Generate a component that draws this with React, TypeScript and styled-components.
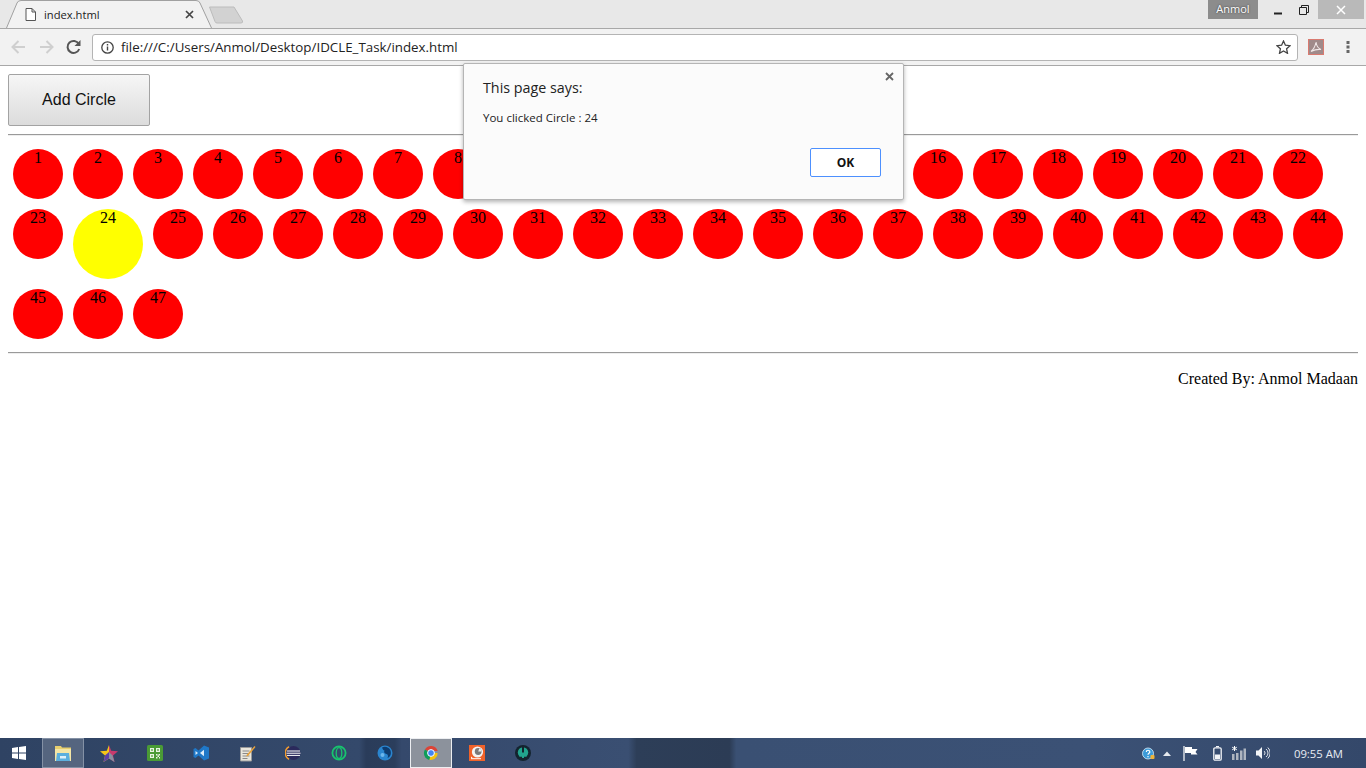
import React from "react";
import styled, { createGlobalStyle } from "styled-components";

const Global = createGlobalStyle`
  html, body { margin: 0; padding: 0; height: 100%; background: #fff; overflow: hidden; }
  #root { height: 100%; }
`;

const Screen = styled.div`
  position: relative;
  width: 1366px;
  height: 768px;
  display: flex;
  flex-direction: column;
  overflow: hidden;
`;

const TabStrip = styled.div`
  height: 28px;
  flex: none;
  background: #e8e8e8;
  border-bottom: 1px solid #a8a8a8;
  display: flex;
  padding-left: 6px;
`;

const Tab = styled.div`
  position: relative;
  width: 206px;
  height: 29px;
  flex: none;
  display: flex;
  align-items: center;
  padding: 0 18px 0 19px;
  box-sizing: border-box;
  gap: 8px;
`;

const TabShape = styled.svg`
  position: absolute;
  left: 0;
  top: 0;
`;

const TabIcon = styled.svg`
  position: relative;
  flex: none;
`;

const TabTitle = styled.span`
  position: relative;
  flex: 1;
  font: 11.2px "Open Sans", sans-serif;
  color: #222;
`;

const NewTab = styled.svg`
  flex: none;
  margin: 6px 0 0 -4px;
`;

const Spacer = styled.div`
  flex: 1;
`;

const UserBadge = styled.div`
  width: 50px;
  height: 19px;
  background: #8c8c8c;
  color: #fff;
  font: 11px "Open Sans", sans-serif;
  line-height: 18px;
  text-align: center;
  text-shadow: 0 0 2px #333;
`;

const WinButton = styled.div<{ $w: number; $bg?: string }>`
  width: ${(p) => p.$w}px;
  height: 19px;
  background: ${(p) => p.$bg ?? "transparent"};
  display: flex;
  align-items: center;
  justify-content: center;
  flex: none;
`;

const Toolbar = styled.div`
  height: 37px;
  flex: none;
  box-sizing: border-box;
  background: #f2f2f2;
  border-bottom: 1px solid #a8a8a8;
  display: flex;
  align-items: center;
  padding-left: 10px;
`;

const NavIcon = styled.svg`
  flex: none;
  margin-right: 11px;
`;

const ReloadIcon = styled.svg`
  flex: none;
  margin-right: 10px;
`;

const Omnibox = styled.div`
  width: 1206px;
  height: 27px;
  box-sizing: border-box;
  background: #fff;
  border: 1px solid #b4b4b4;
  border-radius: 3px;
  display: flex;
  align-items: center;
  padding: 0 6px 0 8px;
  gap: 7px;
  flex: none;
`;

const Url = styled.span`
  flex: 1;
  font: 13.33px "Open Sans", sans-serif;
  color: #222;
`;

const PdfIcon = styled.svg`
  flex: none;
  margin-left: 10px;
`;

const MenuIcon = styled.svg`
  flex: none;
  margin-left: 22px;
`;

const Page = styled.main`
  flex: 1;
  background: #fff;
  padding: 8px;
  font: 16px "Liberation Serif", serif;
  color: #000;
  min-height: 0;
`;

const AddButton = styled.button`
  display: block;
  width: 142px;
  height: 52px;
  box-sizing: border-box;
  background: linear-gradient(#f6f6f6, #dcdcdc);
  border: 1px solid #a3a3a3;
  border-radius: 2px;
  font: 16px "Liberation Sans", sans-serif;
  color: #111;
  padding: 0;
`;

const Rule = styled.hr`
  margin: 8px 0;
  border: 0;
  border-top: 1px solid #9a9a9a;
  border-bottom: 1px solid #eee;
`;

const Circles = styled.div`
  display: flex;
  flex-wrap: wrap;
  align-items: flex-start;
`;

const Circle = styled.div<{ $active?: boolean }>`
  width: ${(p) => (p.$active ? 70 : 50)}px;
  height: ${(p) => (p.$active ? 70 : 50)}px;
  margin: 5px;
  border-radius: 50%;
  background: ${(p) => (p.$active ? "#ffff00" : "#ff0000")};
  text-align: center;
  line-height: 18px;
`;

const Credit = styled.p`
  margin: 16px 0;
  text-align: right;
`;

const Dialog = styled.div`
  position: absolute;
  left: 463px;
  top: 63px;
  width: 441px;
  height: 137px;
  box-sizing: border-box;
  background: #fbfbfb;
  border: 1px solid #b5b5b5;
  border-radius: 2px;
  box-shadow: 0 2px 4px rgba(0, 0, 0, 0.3);
  padding: 14px 22px 0 19px;
  display: flex;
  flex-direction: column;
`;

const DialogClose = styled.svg`
  position: absolute;
  right: 9px;
  top: 8px;
`;

const DialogTitle = styled.div`
  font: 14.3px/20px "Open Sans", sans-serif;
  color: #222;
`;

const DialogText = styled.div`
  font: 11.5px/16px "Open Sans", sans-serif;
  color: #222;
  margin-top: 12px;
`;

const DialogActions = styled.div`
  display: flex;
  justify-content: flex-end;
  margin-top: 22px;
`;

const OkButton = styled.button`
  width: 71px;
  height: 29px;
  box-sizing: border-box;
  background: #fff;
  border: 1px solid #4d90fe;
  border-radius: 2px;
  font: bold 12px "Open Sans", sans-serif;
  color: #111;
  padding: 0;
`;

const Taskbar = styled.footer`
  height: 30px;
  flex: none;
  display: flex;
  align-items: center;
  background: linear-gradient(90deg, #2f4363 0%, #34496b 26.3%, #2a3c5a 26.8%, #2b3e5c 28.9%, #35496c 29.4%, #3a4f72 46%, #2d3e58 46.6%, #2c3c55 53.4%, #3a5073 53.9%, #3b5175 80%, #34486a 100%);
`;

const StartButton = styled.div`
  width: 38px;
  height: 30px;
  display: flex;
  align-items: center;
  justify-content: center;
  flex: none;
  margin-right: 4px;
`;

const TaskItem = styled.div<{ $state?: "open" | "focus" }>`
  width: 42px;
  height: 30px;
  box-sizing: border-box;
  margin-right: 4px;
  flex: none;
  display: flex;
  align-items: center;
  justify-content: center;
  background: ${(p) => (p.$state === "focus" ? "#8c929c" : p.$state === "open" ? "#55657f" : "transparent")};
  border: ${(p) =>
    p.$state === "focus" ? "1px solid #eceef1" : p.$state === "open" ? "1px solid #8491a5" : "none"};
`;

const Tray = styled.div`
  margin-left: auto;
  display: flex;
  align-items: center;
  height: 30px;
`;

const TrayIcon = styled.svg<{ $gap: number }>`
  flex: none;
  margin-right: ${(p) => p.$gap}px;
`;

const Clock = styled.span`
  font: 11.3px "Open Sans", sans-serif;
  color: #e8ecf2;
  margin-right: 23px;
  margin-left: 24px;
`;

const range = Array.from({ length: 47 }, (_, i) => i + 1);

export default function App() {
  return (
    <Screen>
      <Global />
      <TabStrip>
        <Tab>
          <TabShape width="206" height="29" viewBox="0 0 206 29">
            <path d="M0.5 28 L11 3 Q12 0.5 15 0.5 L190 0.5 Q193 0.5 194 3 L205.5 28" fill="#f2f2f2" stroke="#a0a0a0" />
          </TabShape>
          <TabIcon width="11" height="13" viewBox="0 0 11 13">
            <path d="M1 .5h6l3.5 3.5v8.5H1z M7 .5V4h3.5" fill="#fff" stroke="#555" />
          </TabIcon>
          <TabTitle>index.html</TabTitle>
          <TabIcon width="9" height="9" viewBox="0 0 9 9">
            <path d="M1 1l7 7M8 1L1 8" stroke="#444" strokeWidth="1.7" />
          </TabIcon>
        </Tab>
        <NewTab width="36" height="18" viewBox="0 0 36 18">
          <path d="M1.5 1 H26 L34.5 15 Q35 17 33 17 H9 Q7.5 17 7 15.5 Z" fill="#d2d2d2" stroke="#bcbcbc" />
        </NewTab>
        <Spacer />
        <UserBadge>Anmol</UserBadge>
        <WinButton $w={40}>
          <svg width="10" height="10" viewBox="0 0 10 10"><path d="M1 8.500h8" stroke="#222" strokeWidth="2" /></svg>
        </WinButton>
        <WinButton $w={12}>
          <svg width="10" height="10" viewBox="0 0 10 10"><path d="M.5 2.500h7v7h-7z M2.500 2.500v-2h7v7h-2" fill="none" stroke="#222" /></svg>
        </WinButton>
        <WinButton $w={8} />
        <WinButton $w={46} $bg="#b9b9b9">
          <svg width="10" height="10" viewBox="0 0 10 10"><path d="M1 1l8 8M9 1l-8 8" stroke="#fff" strokeWidth="1.500" /></svg>
        </WinButton>
        <WinButton $w={2} />
      </TabStrip>
      <Toolbar>
        <NavIcon width="17" height="16" viewBox="0 0 17 16">
          <path d="M15 8H3M8.500 2L2.500 8l6 6" fill="none" stroke="#cfcfcf" strokeWidth="2" />
        </NavIcon>
        <NavIcon width="17" height="16" viewBox="0 0 17 16">
          <path d="M2 8h12M8.500 2l6 6-6 6" fill="none" stroke="#cfcfcf" strokeWidth="2" />
        </NavIcon>
        <ReloadIcon width="16" height="16" viewBox="0 0 16 16">
          <path d="M13.200 10a6 6 0 1 1-.4-5" fill="none" stroke="#555" strokeWidth="2" />
          <path d="M14.500 1v6h-6z" fill="#555" />
        </ReloadIcon>
        <Omnibox>
          <svg width="13" height="13" viewBox="0 0 13 13" style={{ flex: "none" }}>
            <circle cx="6.500" cy="6.500" r="5.700" fill="none" stroke="#444" strokeWidth="1.300" />
            <path d="M6.500 5.500v4M6.500 3v1.500" stroke="#444" strokeWidth="1.400" />
          </svg>
          <Url>file:///C:/Users/Anmol/Desktop/IDCLE_Task/index.html</Url>
          <svg width="15" height="14" viewBox="0 0 15 14" style={{ flex: "none" }}>
            <path d="M7.500 1l1.900 4.200 4.600.5-3.400 3.100.9 4.500-4-2.300-4 2.300.9-4.500L1 5.700l4.600-.5z" fill="none" stroke="#444" strokeWidth="1.300" />
          </svg>
        </Omnibox>
        <PdfIcon width="16" height="16" viewBox="0 0 16 16">
          <rect x=".5" y=".5" width="15" height="15" fill="#a08a8a" stroke="#d97a70" />
          <path d="M8 3c-.5 3-2 7-5 9.500 3-1.500 7-2.500 10-2-2.500-1-4.500-4-5-7.500z" fill="none" stroke="#efe6e6" strokeWidth="1.100" />
        </PdfIcon>
        <MenuIcon width="4" height="14" viewBox="0 0 4 14">
          <path d="M.5 1h3v3h-3zM.5 5.500h3v3h-3zM.5 10h3v3h-3z" fill="#666" />
        </MenuIcon>
      </Toolbar>
      <Page>
        <AddButton>Add Circle</AddButton>
        <Rule />
        <Circles>
          {range.map((n) => (
            <Circle key={n} $active={n === 24}>{n}</Circle>
          ))}
        </Circles>
        <Rule />
        <Credit>Created By: Anmol Madaan</Credit>
      </Page>
      <Taskbar>
        <StartButton>
          <svg width="14" height="14" viewBox="0 0 14 14">
            <path d="M0 2l6-1v5.500H0zM7 .9L14 0v6.500H7zM0 7.500h6V13l-6-1zM7 7.500h7V14l-7-1z" fill="#fff" />
          </svg>
        </StartButton>
        <TaskItem $state="open">
          <svg width="18" height="17" viewBox="0 0 18 17">
            <path d="M1 1h6l1 1.500h9V15H1z" fill="#e8cf6e" />
            <rect x="1" y="4" width="16" height="12" fill="#f4e6a6" />
            <path d="M3 8h12l1 8H2z" fill="#5cb0de" />
            <rect x="6" y="11" width="6" height="2.500" fill="#dff1fa" />
          </svg>
        </TaskItem>
        <TaskItem>
          <svg width="18" height="17" viewBox="0 0 18 17">
            <path d="M9 0l2.200 5.800L18 6.300l-5 4.200 1.500 6.500L9 13.500z" fill="#c83a6d" />
            <path d="M9 0L6.800 5.800 0 6.300l5 4.200L3.500 17 9 13.500z" fill="#f5c518" />
            <path d="M9 7l3.500 3.500 2 6.500L9 13.500z" fill="#8a8fa0" />
            <path d="M9 7l-4 3.500L3.500 17 9 13.500z" fill="#5b3fa8" />
          </svg>
        </TaskItem>
        <TaskItem>
          <svg width="16" height="16" viewBox="0 0 16 16">
            <rect width="16" height="16" rx="1.500" fill="#4a9b35" />
            <path d="M3 3h4v4H3zM4.200 4.200v1.600h1.600V4.200zM9 3h4v4H9zM10.200 4.200v1.600h1.600V4.200zM3 9h4v4H3zM4.200 10.200v1.600h1.600v-1.600zM9 9h1.500v1.500H9zM11.500 9H13v1.500h-1.500zM10.500 10.500H12V12h-1.500zM9 12h1.500v1.500H9zM12 12h1v1.500h-1z" fill="#e8f4e2" fillRule="evenodd" />
          </svg>
        </TaskItem>
        <TaskItem>
          <svg width="16" height="16" viewBox="0 0 16 16">
            <path d="M11 .5l5 2v11l-5 2-5.500-5L2.500 13 .5 12V4l2-1 3 2.500z" fill="#1f78c8" />
            <path d="M2.500 6v4L5 8z" fill="#dcecfa" />
            <path d="M11 4.800v6.400L7 8z" fill="#dcecfa" />
          </svg>
        </TaskItem>
        <TaskItem>
          <svg width="17" height="17" viewBox="0 0 17 17">
            <path d="M1.500 2.500h11v13.500h-11z" fill="#e9e6dc" stroke="#999" />
            <path d="M3.500 6h7M3.500 8.500h6M3.500 11h7M3.500 13.500h5" stroke="#8a8a8a" />
            <path d="M15.500 1L8 9.500l-.8 2 2-.8L16.500 2z" fill="#e8a23a" />
          </svg>
        </TaskItem>
        <TaskItem>
          <svg width="16" height="16" viewBox="0 0 16 16">
            <circle cx="8.500" cy="8" r="7" fill="#2b2a5c" />
            <path d="M2 6h13M1.500 8.200h14M2 10.400h13" stroke="#fff" />
            <path d="M4 1.800A7 7 0 0 0 4 14.200" fill="none" stroke="#f29a2e" strokeWidth="1.600" />
          </svg>
        </TaskItem>
        <TaskItem>
          <svg width="16" height="16" viewBox="0 0 16 16">
            <circle cx="8" cy="8" r="6.600" fill="none" stroke="#18c46e" strokeWidth="1.800" />
            <ellipse cx="8" cy="8" rx="2.800" ry="5.400" fill="none" stroke="#18c46e" strokeWidth="1.300" />
          </svg>
        </TaskItem>
        <TaskItem>
          <svg width="16" height="16" viewBox="0 0 16 16">
            <circle cx="8" cy="8" r="7.500" fill="#2a85cf" />
            <path d="M5 2.500c3-1.500 7-.5 8.500 3 1 3 0 6.500-3 7.500 1-2 .5-3.500-1-4-2-.5-3-2-2-3.500C6.300 5.500 5.500 4 5 2.500z" fill="#0e3c70" />
            <circle cx="5.500" cy="10" r="2" fill="#6bb6ec" />
          </svg>
        </TaskItem>
        <TaskItem $state="focus">
          <svg width="16" height="16" viewBox="0 0 16 16">
            <path d="M8 8L1.900 4.500A7 7 0 0 1 14.700 6H8z" fill="#db4437" />
            <path d="M8 8L1.900 4.500A7 7 0 0 0 6.500 14.900z" fill="#0f9d58" />
            <path d="M8 8h6.700A7 7 0 0 1 6.500 14.900z" fill="#f4c20d" />
            <circle cx="8" cy="8" r="3.400" fill="#4285f4" stroke="#fff" strokeWidth="1" />
          </svg>
        </TaskItem>
        <TaskItem>
          <svg width="16" height="16" viewBox="0 0 16 16">
            <rect width="16" height="16" fill="#f0622a" />
            <circle cx="8.500" cy="7" r="5.600" fill="#f4f4f4" />
            <circle cx="9.200" cy="6.500" r="3.400" fill="#7a7a7a" />
            <path d="M9.200 6.500l1.200-3.200a3.400 3.400 0 0 1 2.200 3.200z" fill="#ececec" />
            <path d="M2 13.200h10v1H2z" fill="#fff" />
            <path d="M2 11.500l2 1.700H2z" fill="#fff" />
          </svg>
        </TaskItem>
        <TaskItem>
          <svg width="16" height="16" viewBox="0 0 16 16">
            <circle cx="8" cy="8" r="8" fill="#14242f" />
            <circle cx="8" cy="7.500" r="5.200" fill="#22a58e" />
            <path d="M8 2v5.500" stroke="#14242f" strokeWidth="2" />
            <path d="M8 8v5" stroke="#22a58e" strokeWidth="2.400" />
            <path d="M5 12.500h2M9 12.500h2" stroke="#14242f" strokeWidth="1.600" />
          </svg>
        </TaskItem>
        <Tray>
          <TrayIcon $gap={8} width="13" height="13" viewBox="0 0 13 13">
            <circle cx="6" cy="6.500" r="5.500" fill="#3b9ad9" stroke="#d9eefb" strokeWidth=".8" />
            <path d="M4.300 5c0-2.300 3.500-2.300 3.500-.1C7.800 6.200 6 6.200 6 7.800M6 9v1.300" fill="none" stroke="#fff" strokeWidth="1.200" />
            <rect x="8.500" y="8" width="4" height="4" rx="1" fill="#f0b43a" />
          </TrayIcon>
          <TrayIcon $gap={12} width="8" height="5" viewBox="0 0 8 5">
            <path d="M4 .5L8 5H0z" fill="#e6e9ee" />
          </TrayIcon>
          <TrayIcon $gap={15} width="15" height="15" viewBox="0 0 15 15">
            <path d="M1 0v15" stroke="#fff" strokeWidth="1.200" />
            <path d="M2 1h7v2h5.500L12.500 6l2 2.500H8V7H2z" fill="#fff" />
          </TrayIcon>
          <TrayIcon $gap={9} width="9" height="15" viewBox="0 0 9 15">
            <rect x=".8" y="1.800" width="7.400" height="12.400" rx="1.200" fill="none" stroke="#f2f4f7" strokeWidth="1.300" />
            <path d="M3 .6h3" stroke="#f2f4f7" strokeWidth="1.200" />
            <rect x="2" y="8.500" width="5" height="4.500" fill="#f2f4f7" />
          </TrayIcon>
          <TrayIcon $gap={8} width="16" height="14" viewBox="0 0 16 14">
            <path d="M3.500 0v5M1.200 1.200l4.600 2.600M5.800 1.200L1.200 3.800" stroke="#fff" />
            <path d="M1 8h2.500v6H1zM5 7h2.500v7H5zM9 4.500h2.500V14H9zM12.500 2.500H15V14h-2.500z" fill="#aeb5c0" />
          </TrayIcon>
          <TrayIcon $gap={0} width="15" height="14" viewBox="0 0 15 14">
            <path d="M1 4.500h2.500L7 1v12L3.500 9.500H1z" fill="#f2f4f7" />
            <path d="M9 5a2.500 2.500 0 0 1 0 4M11 3a5 5 0 0 1 0 8M12.800 1.500a7.500 7.500 0 0 1 0 11" fill="none" stroke="#dfe3e9" />
          </TrayIcon>
          <Clock>09:55 AM</Clock>
        </Tray>
      </Taskbar>
      <Dialog>
        <DialogClose width="9" height="9" viewBox="0 0 9 9">
          <path d="M1 1l7 7M8 1L1 8" stroke="#666" strokeWidth="1.800" />
        </DialogClose>
        <DialogTitle>This page says:</DialogTitle>
        <DialogText>You clicked Circle : 24</DialogText>
        <DialogActions>
          <OkButton>OK</OkButton>
        </DialogActions>
      </Dialog>
    </Screen>
  );
}
